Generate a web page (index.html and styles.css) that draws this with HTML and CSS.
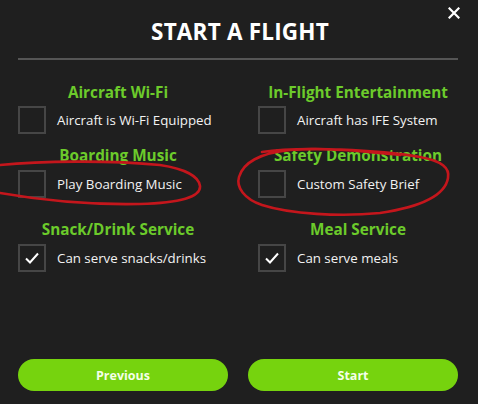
FILE: index.html
```html
<!DOCTYPE html>
<html>
<head>
<meta charset="utf-8">
<link rel="stylesheet" href="styles.css">
</head>
<body>
<div class="dialog">
  <button class="close" aria-label="Close">
    <svg width="12" height="12" viewBox="0 0 12 12"><path d="M1.5 1.5 L10.5 10.5 M10.5 1.5 L1.5 10.5" stroke="#fff" stroke-width="2.2" stroke-linecap="square"/></svg>
  </button>
  <h1 class="title">START A FLIGHT</h1>
  <div class="divider"></div>
  <div class="grid">
    <div class="option">
      <div class="heading">Aircraft Wi-Fi</div>
      <label class="row"><span class="box"></span><span class="label">Aircraft is Wi-Fi Equipped</span></label>
    </div>
    <div class="option">
      <div class="heading">In-Flight Entertainment</div>
      <label class="row"><span class="box"></span><span class="label">Aircraft has IFE System</span></label>
    </div>
    <div class="option second">
      <div class="heading">Boarding Music</div>
      <label class="row"><span class="box"></span><span class="label">Play Boarding Music</span></label>
    </div>
    <div class="option second">
      <div class="heading">Safety Demonstration</div>
      <label class="row"><span class="box"></span><span class="label">Custom Safety Brief</span></label>
    </div>
    <div class="option third">
      <div class="heading">Snack/Drink Service</div>
      <label class="row"><span class="box checked"><svg width="16" height="14" viewBox="0 0 16 14"><path d="M2 7.5 L6 11.5 L14 2.5" fill="none" stroke="#fff" stroke-width="2"/></svg></span><span class="label">Can serve snacks/drinks</span></label>
    </div>
    <div class="option third">
      <div class="heading">Meal Service</div>
      <label class="row"><span class="box checked"><svg width="16" height="14" viewBox="0 0 16 14"><path d="M2 7.5 L6 11.5 L14 2.5" fill="none" stroke="#fff" stroke-width="2"/></svg></span><span class="label">Can serve meals</span></label>
    </div>
  </div>
  <div class="actions">
    <button class="btn">Previous</button>
    <button class="btn">Start</button>
  </div>
  <svg class="marks" width="478" height="404" viewBox="0 0 478 404">
    <path d="M0 165 C40 161 110 160 160 165 C186 169 199 177 200 186 C201 197 180 203 140 204 C90 205 40 200 0 193" fill="none" stroke="#c4161c" stroke-width="2.6" stroke-linecap="round"/>
    <path d="M262 152 C300 146 380 150 420 157 C442 161 450 168 448 178 C445 196 420 207 380 213 C340 217 290 214 262 205 C244 199 236 187 239 177 C243 163 260 153 290 150 C330 147 370 152 400 155" fill="none" stroke="#c4161c" stroke-width="2.6" stroke-linecap="round"/>
  </svg>
</div>
</body>
</html>
```

FILE: styles.css
```css
* { box-sizing: border-box; }
html, body {
  margin: 0;
  padding: 0;
  background: #1f1f1f;
}
body {
  font-family: "Open Sans", "Noto Sans", sans-serif;
  color: #fff;
}
.dialog {
  position: relative;
  width: 478px;
  height: 404px;
  padding: 17px 20px 0 18px;
  display: flex;
  flex-direction: column;
}
.close {
  position: absolute;
  top: 6px;
  right: 17px;
  width: 14px;
  height: 14px;
  padding: 0;
  border: 0;
  background: none;
  display: flex;
  align-items: center;
  justify-content: center;
}
.title {
  margin: 0;
  text-align: center;
  font-size: 22.5px;
  font-weight: 700;
  line-height: 30px;
  letter-spacing: 0.2px;
  padding-left: 4px;
}
.divider {
  height: 2px;
  background: #555;
  margin-top: 11px;
}
.grid {
  display: grid;
  grid-template-columns: 200px 200px;
  column-gap: 40px;
  margin-top: 20px;
}
.option {
  display: flex;
  flex-direction: column;
}
.option.second { margin-top: 9px; }
.option.third { margin-top: 19px; }
.heading {
  color: #6ccb2b;
  font-weight: 700;
  font-size: 15.3px;
  line-height: 24px;
  text-align: center;
  height: 24px;
  white-space: nowrap;
}
.row {
  display: flex;
  align-items: center;
  gap: 11px;
  margin-top: 2px;
}
.second .row, .third .row { margin-top: 3px; }
.box {
  width: 28px;
  height: 28px;
  border: 2px solid #464646;
  flex: none;
  display: flex;
  align-items: center;
  justify-content: center;
}
.label {
  font-size: 13.3px;
  white-space: nowrap;
  color: #f2f2f2;
}
.actions {
  margin-top: auto;
  margin-bottom: 13px;
  display: grid;
  grid-template-columns: 210px 210px;
  column-gap: 20px;
}
.btn {
  height: 32px;
  border: 0;
  border-radius: 16px;
  background: #76d30e;
  color: #f4ffe8;
  font-family: "Open Sans", "Noto Sans", sans-serif;
  font-weight: 700;
  font-size: 12.5px;
}
.marks {
  position: absolute;
  left: 0;
  top: 0;
  pointer-events: none;
}
```
